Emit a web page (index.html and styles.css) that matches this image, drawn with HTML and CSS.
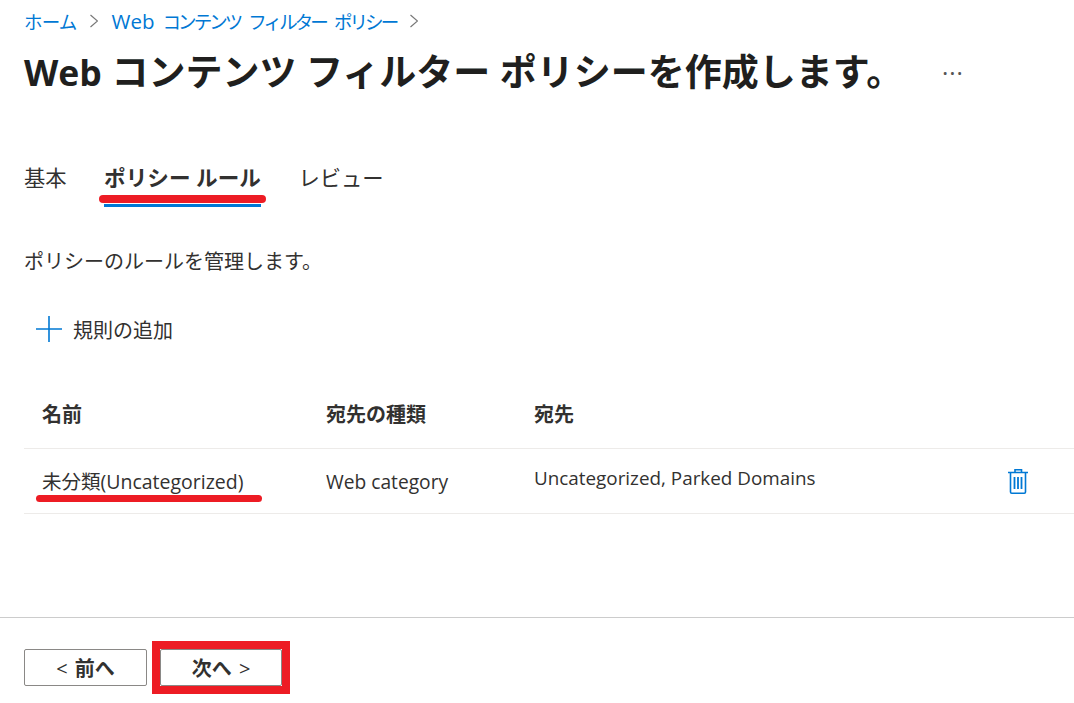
FILE: index.html
```html
<!DOCTYPE html>
<html lang="ja">
<head>
<meta charset="utf-8">
<title>Web コンテンツ フィルター ポリシー</title>
<link rel="stylesheet" href="styles.css">
</head>
<body>
<div class="page">
  <nav class="crumbs">
    <a class="crumb">ホーム</a>
    <svg class="chev" width="8" height="14" viewBox="0 0 8 14"><path d="M.5 1l7 6-7 6" fill="none" stroke="#777" stroke-width="1.2"/></svg>
    <a class="crumb crumb-long"><span class="crumb-latin">Web</span> コンテンツ フィルター ポリシー</a>
    <svg class="chev" width="8" height="14" viewBox="0 0 8 14"><path d="M.5 1l7 6-7 6" fill="none" stroke="#777" stroke-width="1.2"/></svg>
  </nav>
  <header class="title-row">
    <h1 class="title"><span class="title-latin">Web</span> コンテンツ フィルター ポリシーを作成します。</h1>
    <span class="more">···</span>
  </header>
  <div class="tabs">
    <span class="tab">基本</span>
    <span class="tab tab-active">ポリシー ルール<i class="mark mark-tab"></i></span>
    <span class="tab">レビュー</span>
  </div>
  <p class="desc">ポリシーのルールを管理します。</p>
  <div class="add">
    <svg width="26" height="26" viewBox="0 0 26 26"><path d="M13 0v26M0 13h26" stroke="#0078d4" stroke-width="1.6" fill="none"/></svg>
    <span>規則の追加</span>
  </div>
  <div class="table">
    <div class="row head">
      <span>名前</span><span>宛先の種類</span><span>宛先</span><span></span>
    </div>
    <div class="row body-row">
      <span class="name">未分類(Uncategorized)<i class="mark mark-name"></i></span>
      <span class="kind">Web category</span>
      <span class="dest">Uncategorized, Parked Domains</span>
      <svg class="trash" width="20" height="25" viewBox="0 0 20 25"><g fill="none" stroke="#0078d4" stroke-width="1.6"><path d="M0 3.500h20M2.500 3.500v19.500a1.200 1.200 0 0 0 1.200 1.200h12.600a1.200 1.200 0 0 0 1.200-1.200V3.500M7 3.500V.8h6.500v2.700"/><path d="M6.500 8v12M10 8v12M13.500 8v12" stroke-width="1.800"/></g></svg>
    </div>
  </div>
  <footer class="footer">
    <button class="btn"><span class="arrow">&lt;</span> 前へ</button>
    <button class="btn btn-next">次へ <span class="arrow">&gt;</span></button>
  </footer>
</div>
</body>
</html>
```
FILE: styles.css
```css
* { box-sizing: border-box; }
html, body { margin: 0; height: 100%; overflow: hidden; background: #fff; }
body {
  font-family: "Open Sans", "Noto Sans CJK JP", sans-serif;
  color: #323130;
}
.page { width: 1074px; height: 703px; display: flex; flex-direction: column; }
.crumbs { display: flex; align-items: center; gap: 13.500px; height: 22px; margin: 10px 0 0 24px; font-size: 18.500px; letter-spacing: -0.800px; }
.crumb { color: #0078d4; white-space: nowrap; }
.crumb-long { letter-spacing: -2.900px; word-spacing: 6px; }
.crumb-latin { font-size: 20.500px; letter-spacing: 0; }
.chev { flex: none; }
.title-row { display: flex; align-items: center; height: 56px; margin: 12px 0 0 24px; }
.title { margin: 0; width: 918px; font-size: 37px; font-weight: 700; color: #201f1e; white-space: nowrap; line-height: 56px; }
.title-latin { font-size: 35.500px; }
.more { font-size: 24px; letter-spacing: 1px; color: #555; }
.tabs { display: flex; gap: 37.500px; height: 44px; margin: 62px 0 0 24px; font-size: 21.300px; }
.tab { position: relative; line-height: 32px; white-space: nowrap; }
.tab-active { font-weight: 700; font-size: 21.600px; }
.tab-active::after { content: ""; position: absolute; left: 0; right: 0; top: 42px; height: 3px; background: #0078d4; }
.mark { position: absolute; display: block; background: #ed1c24; border-radius: 4px; z-index: 1; }
.mark-tab { left: -5px; right: -5px; top: 33px; height: 8px; }
.mark-name { left: -6px; width: 226px; top: 29px; height: 7px; }
.desc { margin: 41px 0 0 24px; font-size: 20px; line-height: 30px; }
.add { display: flex; align-items: center; gap: 11px; height: 32px; margin: 36px 0 0 36px; font-size: 20px; }
.table { margin: 35px 0 0 24px; }
.row { display: grid; grid-template-columns: 284px 208px 474px 108px; padding-left: 18px; }
.head { height: 69px; padding-bottom: 2px; align-items: center; font-size: 20px; font-weight: 700; border-bottom: 1px solid #edebe9; }
.body-row { height: 65px; align-items: center; font-size: 19.200px; border-bottom: 1px solid #edebe9; }
.name { position: relative; white-space: nowrap; font-size: 19.500px; margin-top: -1px; }
.kind { margin-top: 1px; }
.dest { align-self: start; margin-top: 16px; white-space: nowrap; font-size: 18.850px; }
.footer { margin-top: auto; height: 86px; border-top: 1px solid #ccc; display: flex; gap: 13px; padding: 31px 0 0 24px; }
.btn { position: relative; width: 123px; height: 37px; background: #fff; border: 1px solid #8a8886; border-radius: 2px; font: 700 20px "Open Sans", "Noto Sans CJK JP", sans-serif; word-spacing: 2px; color: #323130; padding: 0; }
.arrow { font-weight: 400; font-size: 20px; }
.btn-next { width: 122px; }
.btn-next::after { content: ""; position: absolute; inset: -9px; border: 8px solid #ed1c24; }
```
